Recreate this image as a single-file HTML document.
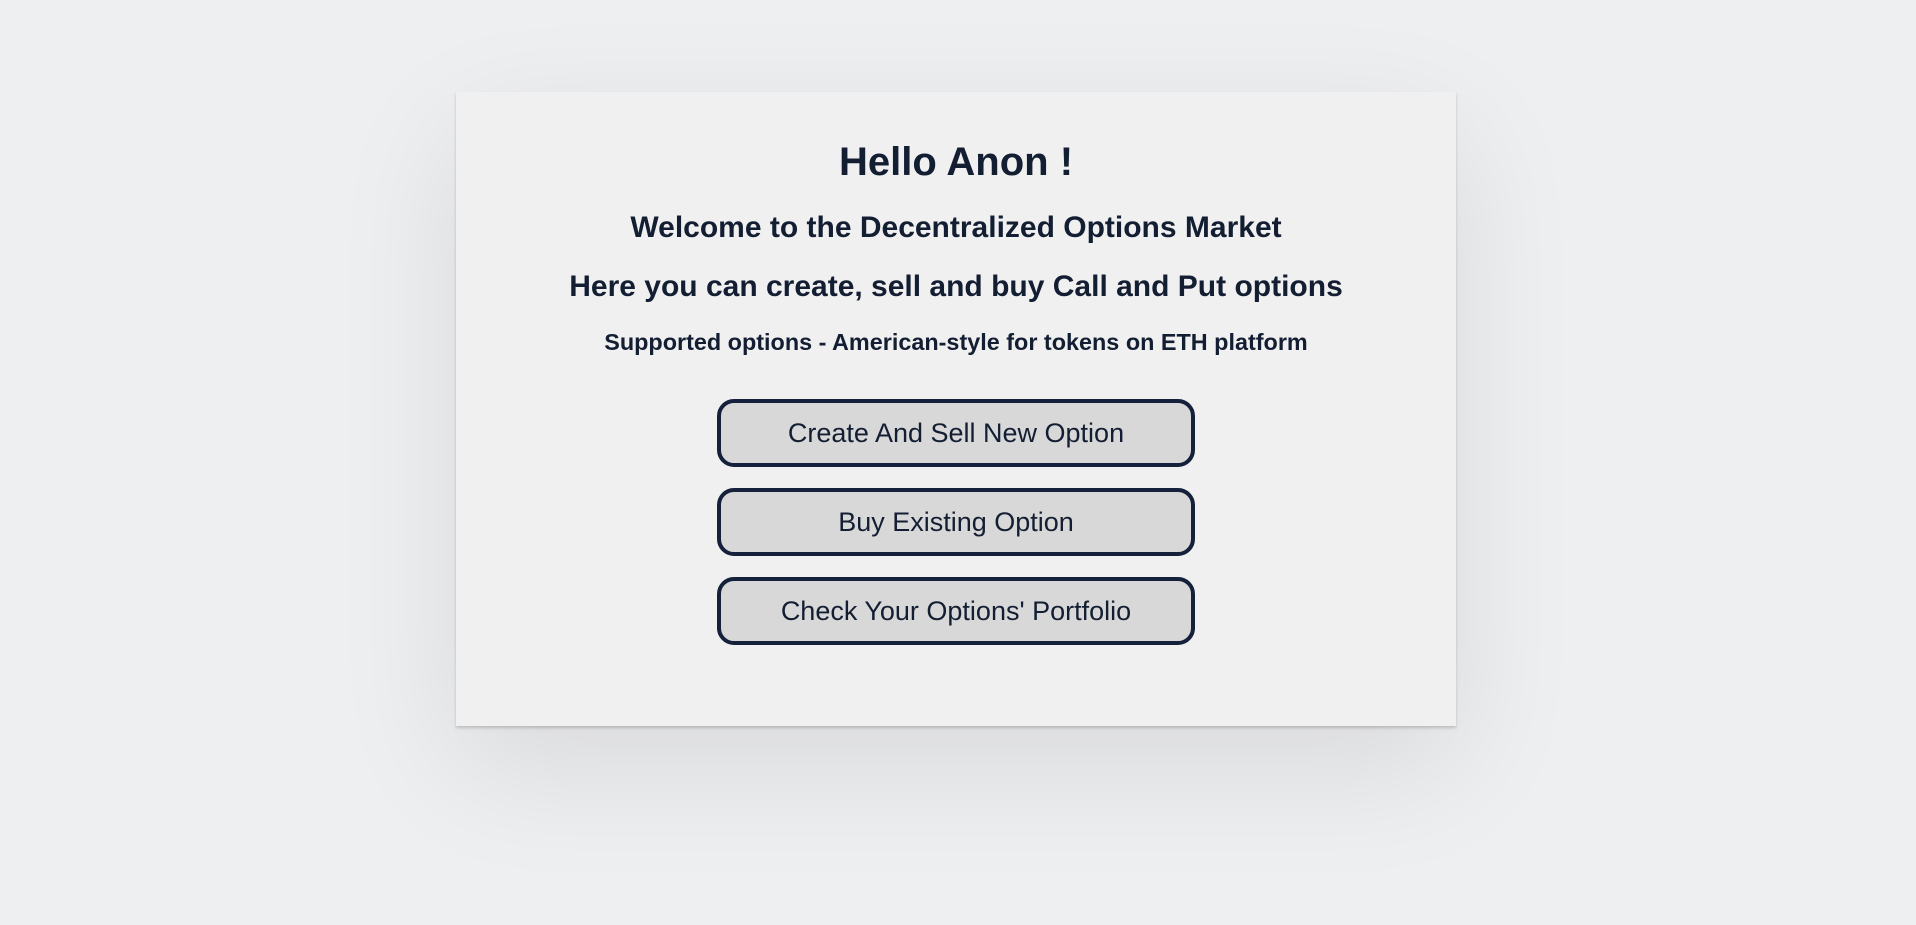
<!DOCTYPE html>
<html><head><meta charset="utf-8"><style>
html,body{margin:0;padding:0;width:1916px;height:925px;background:#eeeff1;overflow:hidden;font-family:"Liberation Sans",Arial,sans-serif;color:#131e33}
.card{position:absolute;left:456px;top:92px;width:1000px;height:634px;background:#f0f0f0;box-shadow:0 2px 3px rgba(0,0,0,0.18),0 40px 120px rgba(0,0,0,0.09)}
.t{position:absolute;left:0;width:100%;text-align:center;font-weight:bold;white-space:nowrap}
.b{position:absolute;left:261px;width:470px;height:60px;border:4px solid #15213a;border-radius:17px;background:#d8d8d8;text-align:center;line-height:60px;font-size:27px;color:#131e33}
</style></head><body>
<div class="card">
<div class="t" style="top:46px;font-size:40px;line-height:48px">Hello Anon !</div>
<div class="t" style="top:118px;font-size:30px;line-height:36px">Welcome to the Decentralized Options Market</div>
<div class="t" style="top:177px;font-size:30px;line-height:36px">Here you can create, sell and buy Call and Put options</div>
<div class="t" style="top:236px;font-size:23.4px;line-height:28px">Supported options - American-style for tokens on ETH platform</div>
<div class="b" style="top:307px">Create And Sell New Option</div>
<div class="b" style="top:396px">Buy Existing Option</div>
<div class="b" style="top:485px">Check Your Options' Portfolio</div>
</div>
</body></html>
